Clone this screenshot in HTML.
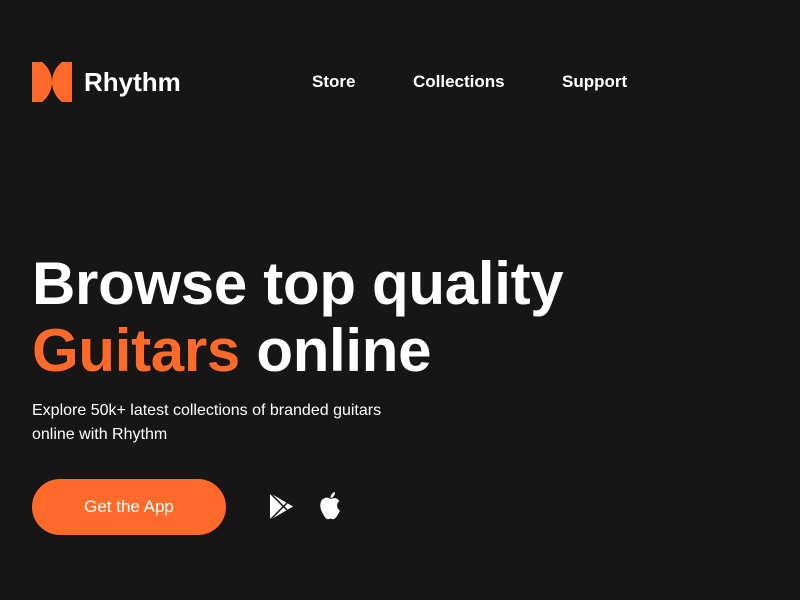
<!DOCTYPE html>
<html><head><style>
*{margin:0;padding:0;box-sizing:border-box}
body{width:800px;height:600px;background:#161616;font-family:"Liberation Sans",sans-serif;color:#fff;position:relative;overflow:hidden}
.logo{position:absolute;left:32px;top:62px}
.brand{position:absolute;left:84px;top:67px;font-size:26px;font-weight:bold}
.nav a{position:absolute;top:72px;font-size:17px;font-weight:bold;color:#fff;text-decoration:none}
h1{position:absolute;left:32px;top:250px;font-size:60px;line-height:67px;font-weight:bold;letter-spacing:-0.3px}
h1 span{color:#ff6a2b}
p{position:absolute;left:32px;top:399px;font-size:16px;line-height:24px;width:375px}
.btn{position:absolute;left:32px;top:479px;width:194px;height:56px;border-radius:28px;background:#ff6a2b;color:#fff;font-size:17px;text-align:center;line-height:56px}
</style></head><body>
<svg class="logo" width="40" height="40" viewBox="0 0 40 40"><path d="M0 0H10A25 25 0 0 1 10 40H0Z" fill="#ff6a2b"/><path d="M40 0H30A25 25 0 0 0 30 40H40Z" fill="#ff6a2b"/></svg>
<div class="brand">Rhythm</div>
<div class="nav"><a style="left:312px">Store</a><a style="left:413px">Collections</a><a style="left:562px">Support</a></div>
<h1>Browse top quality<br><span>Guitars</span> online</h1>
<p>Explore 50k+ latest collections of branded guitars online with Rhythm</p>
<div class="btn">Get the App</div>
<svg style="position:absolute;left:269px;top:493px" width="24" height="27" viewBox="0 0 24 27"><path d="M1 0L24 13.5L1 27Z" fill="#fff"/><path d="M1 0L18 17M1 27L18 10" stroke="#161616" stroke-width="1.5"/></svg>
<svg style="position:absolute;left:318px;top:491px" width="25" height="30" viewBox="0 0 25 30"><path d="M12.5 8C10 6 7 6.5 5 8C1.5 10.5 1.5 17 4.5 22C6.5 26 8.5 29 11 28C12 27.5 13 27.5 14 28C16.5 29 18.5 26 20.5 22.5C21 21.5 21.5 20.5 22 19.5C18.5 18 18 12 21.5 10C19.5 7 16 6.5 12.5 8Z" fill="#fff"/><path d="M12.5 7C12.5 4 14.5 1.5 17 1C17.3 4 15 6.8 12.5 7Z" fill="#fff"/></svg>
</body></html>
